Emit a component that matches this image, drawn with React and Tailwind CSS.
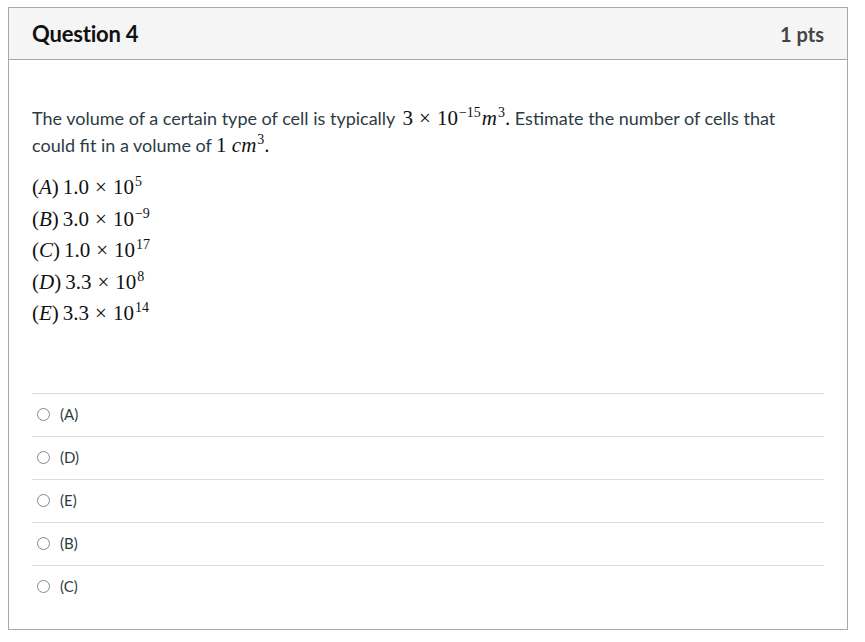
import React from 'react';

const serif = { fontFamily: '"Liberation Serif", "DejaVu Serif", serif' };

const M = ({ children, className = '' }) => (
    <span className={`text-[21px] text-[#111] ${className}`} style={serif}>{children}</span>
);

const Sup = ({ children }) => (
    <sup className="text-[14px] -top-[0.55em] ml-[1px]">{children}</sup>
);

const Times = () => <span className="mx-[6px]">×</span>;

const choices = [
    { l: 'A', m: '1.0', e: '5' },
    { l: 'B', m: '3.0', e: '−9' },
    { l: 'C', m: '1.0', e: '17' },
    { l: 'D', m: '3.3', e: '8' },
    { l: 'E', m: '3.3', e: '14' },
];

const answers = ['(A)', '(D)', '(E)', '(B)', '(C)'];

export default function App() {
    return (
        <div className="pl-2 pt-[7px] pr-[17px] pb-3 bg-white" style={{ fontFamily: 'Lato, "Liberation Sans", sans-serif' }}>
            <div className="border border-[#a8a8a8] bg-white">
                <div className="h-[52px] bg-[#f5f5f5] border-b border-[#a8a8a8] flex items-center justify-between px-[23px]">
                    <h2 className="text-[22px] font-bold text-[#111] tracking-[-0.2px]">Question 4</h2>
                    <span className="text-[20px] font-bold text-[#444]">1 pts</span>
                </div>
                <div className="px-[23px] pt-[45px] pb-[21px]">
                    <p className="text-[18px] leading-[27px] text-[#2d3b45] pr-[25px]">
                        The volume of a certain type of cell is typically{' '}
                        <M className="ml-[3px]">3<Times />10<Sup>−15</Sup><i className="ml-[1px]">m</i><Sup>3</Sup>.</M>
                        {'  '}Estimate the number of cells that could fit in a volume of{' '}
                        <M>1 <i>cm</i><Sup>3</Sup>.</M>
                    </p>
                    <div className="mt-[13px] flex flex-col">
                        {choices.map(c => (
                            <div key={c.l} className="leading-[31.5px]">
                                <M>(<i>{c.l}</i>)<span className="ml-[4px]">{c.m}</span><Times />10<Sup>{c.e}</Sup></M>
                            </div>
                        ))}
                    </div>
                    <div className="mt-[63px]">
                        {answers.map(a => (
                            <div key={a} className="border-t border-[#dcdcdc] h-[43px] flex items-center pl-[5px]">
                                <span className="w-[13px] h-[13px] rounded-full border border-[#888] bg-white" />
                                <span className="ml-[10px] text-[15px] text-[#2d3b45]">{a}</span>
                            </div>
                        ))}
                    </div>
                </div>
            </div>
        </div>
    );
}
